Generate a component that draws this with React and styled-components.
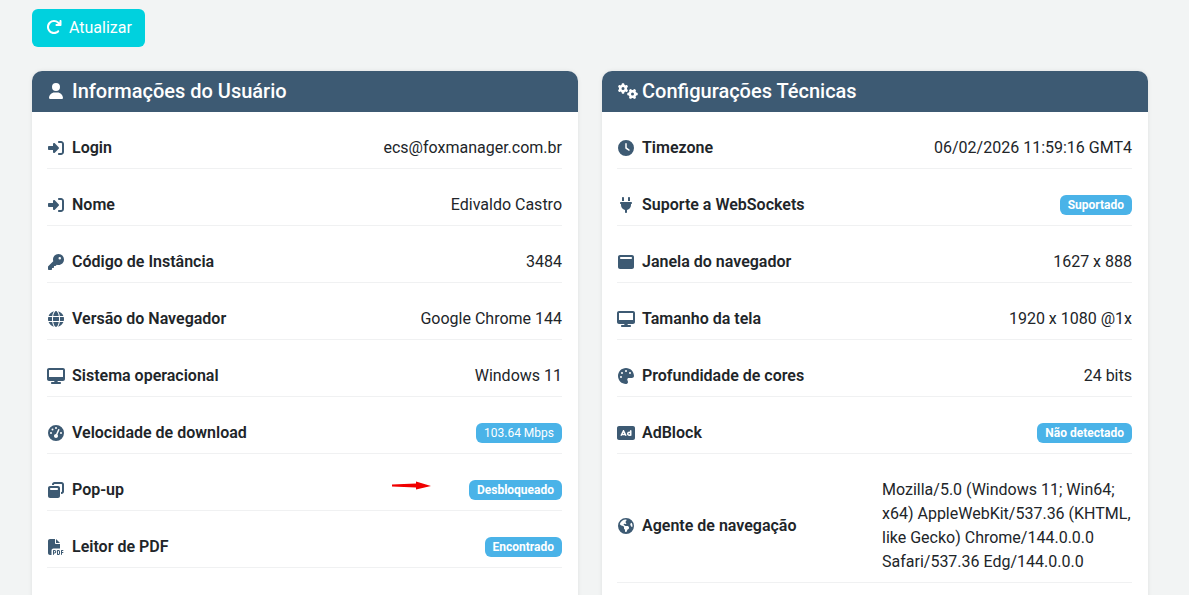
import React from "react";
import styled, { createGlobalStyle } from "styled-components";
import {
    FaArrowRotateRight,
    FaClock,
    FaDesktop,
    FaEarthAmericas,
    FaFilePdf,
    FaGaugeHigh,
    FaGears,
    FaGlobe,
    FaKey,
    FaPalette,
    FaPlug,
    FaRectangleAd,
    FaRightToBracket,
    FaUser,
    FaWindowMaximize,
    FaWindowRestore,
} from "react-icons/fa6";

const GlobalStyle = createGlobalStyle`
    html, body {
        margin: 0;
        height: 100%;
        overflow: hidden;
        background: #f2f4f4;
    }
    body {
        font-family: Roboto, "Liberation Sans", sans-serif;
        font-size: 16px;
        color: #212529;
    }
    * {
        box-sizing: border-box;
    }
`;

const Page = styled.div`
    height: 100vh;
    overflow: hidden;
    padding: 9px 41px 0 32px;
`;

const RefreshButton = styled.button`
    display: flex;
    align-items: center;
    gap: 7px;
    height: 38px;
    padding: 0 13px 2px 14px;
    border: 0;
    border-radius: 6px;
    background: #00d1de;
    color: #fff;
    font-family: inherit;
    font-size: 16px;
    margin-bottom: 24px;
`;

const Columns = styled.div`
    display: grid;
    grid-template-columns: 546px 546px;
    gap: 24px;
`;

const Card = styled.section`
    background: #fff;
    border-radius: 10px;
    box-shadow: 0 0 4px rgba(0, 0, 0, 0.08);
    min-height: 560px;
`;

const CardHeader = styled.h2`
    display: flex;
    align-items: center;
    gap: ${(props) => props.$gap}px;
    height: 41px;
    margin: 0;
    padding: 0 16px 2px;
    border-radius: 10px 10px 0 0;
    background: #3d5a73;
    color: #fff;
    font-size: 20px;
    font-weight: 500;
`;

const CardBody = styled.div`
    padding: 15px 16px 0 15px;
`;

const Row = styled.div`
    position: relative;
    display: flex;
    align-items: center;
    justify-content: space-between;
    padding: 10px 0;
    margin-bottom: 15px;
    border-bottom: 1px solid #f0f1f2;
    line-height: 21px;
`;

const Label = styled.div`
    display: flex;
    align-items: center;
    font-weight: 600;
    font-size: 16px;
`;

const IconSlot = styled.span`
    display: flex;
    align-items: center;
    justify-content: center;
    flex: 0 0 18px;
    margin-right: 7px;
    color: #3d5a73;
`;

const Value = styled.div`
    text-align: ${(props) => (props.$wide ? "left" : "right")};
    width: ${(props) => (props.$wide ? "250px" : "auto")};
    line-height: ${(props) => (props.$wide ? "24px" : "21px")};
    margin: ${(props) => (props.$wide ? "-1px 0 -2px" : "0")};
`;

const Badge = styled.span`
    display: inline-block;
    padding: 0 8px;
    height: 20px;
    line-height: 20px;
    border-radius: 6px;
    background: #4ab3e8;
    color: #fff;
    font-size: 12px;
    font-weight: ${(props) => (props.$light ? 400 : 700)};
`;

const RedArrow = styled.svg`
    position: absolute;
    left: 345px;
    top: 12px;
`;

const userRows = [
    { icon: <FaRightToBracket size={16} />, label: "Login", value: "ecs@foxmanager.com.br" },
    { icon: <FaRightToBracket size={16} />, label: "Nome", value: "Edivaldo Castro" },
    { icon: <FaKey size={16} />, label: "Código de Instância", value: "3484" },
    { icon: <FaGlobe size={16} />, label: "Versão do Navegador", value: "Google Chrome 144" },
    { icon: <FaDesktop size={18} />, label: "Sistema operacional", value: "Windows 11" },
    { icon: <FaGaugeHigh size={16} />, label: "Velocidade de download", badge: "103.64 Mbps", light: true },
    { icon: <FaWindowRestore size={16} />, label: "Pop-up", badge: "Desbloqueado", arrow: true },
    { icon: <FaFilePdf size={16} />, label: "Leitor de PDF", badge: "Encontrado" },
];

const techRows = [
    { icon: <FaClock size={16} />, label: "Timezone", value: "06/02/2026 11:59:16 GMT4" },
    { icon: <FaPlug size={16} />, label: "Suporte a WebSockets", badge: "Suportado" },
    { icon: <FaWindowMaximize size={16} />, label: "Janela do navegador", value: "1627 x 888" },
    { icon: <FaDesktop size={18} />, label: "Tamanho da tela", value: "1920 x 1080 @1x" },
    { icon: <FaPalette size={16} />, label: "Profundidade de cores", value: "24 bits" },
    { icon: <FaRectangleAd size={18} />, label: "AdBlock", badge: "Não detectado" },
    {
        icon: <FaEarthAmericas size={16} />,
        label: "Agente de navegação",
        wide: true,
        value: "Mozilla/5.0 (Windows 11; Win64; x64) AppleWebKit/537.36 (KHTML, like Gecko) Chrome/144.0.0.0 Safari/537.36 Edg/144.0.0.0",
    },
];

const InfoRow = ({ icon, label, value, badge, light, wide, arrow }) => (
    <Row>
        <Label>
            <IconSlot>{icon}</IconSlot>
            {label}
        </Label>
        {arrow && (
            <RedArrow width="40" height="10" viewBox="0 0 40 10">
                <path d="M0 3.5l24-1V.5L39 5l-15 3.5V6.5L0 5.5z" fill="#f00000" />
            </RedArrow>
        )}
        {badge ? <Badge $light={light}>{badge}</Badge> : <Value $wide={wide}>{value}</Value>}
    </Row>
);

const App = () => (
    <Page>
        <GlobalStyle />
        <RefreshButton>
            <FaArrowRotateRight size={16} />
            Atualizar
        </RefreshButton>
        <Columns>
            <Card>
                <CardHeader $gap={8}>
                    <FaUser size={16} />
                    Informações do Usuário
                </CardHeader>
                <CardBody>
                    {userRows.map((row) => (
                        <InfoRow key={row.label} {...row} />
                    ))}
                </CardBody>
            </Card>
            <Card>
                <CardHeader $gap={4}>
                    <FaGears size={20} />
                    Configurações Técnicas
                </CardHeader>
                <CardBody>
                    {techRows.map((row) => (
                        <InfoRow key={row.label} {...row} />
                    ))}
                </CardBody>
            </Card>
        </Columns>
    </Page>
);

export default App;
